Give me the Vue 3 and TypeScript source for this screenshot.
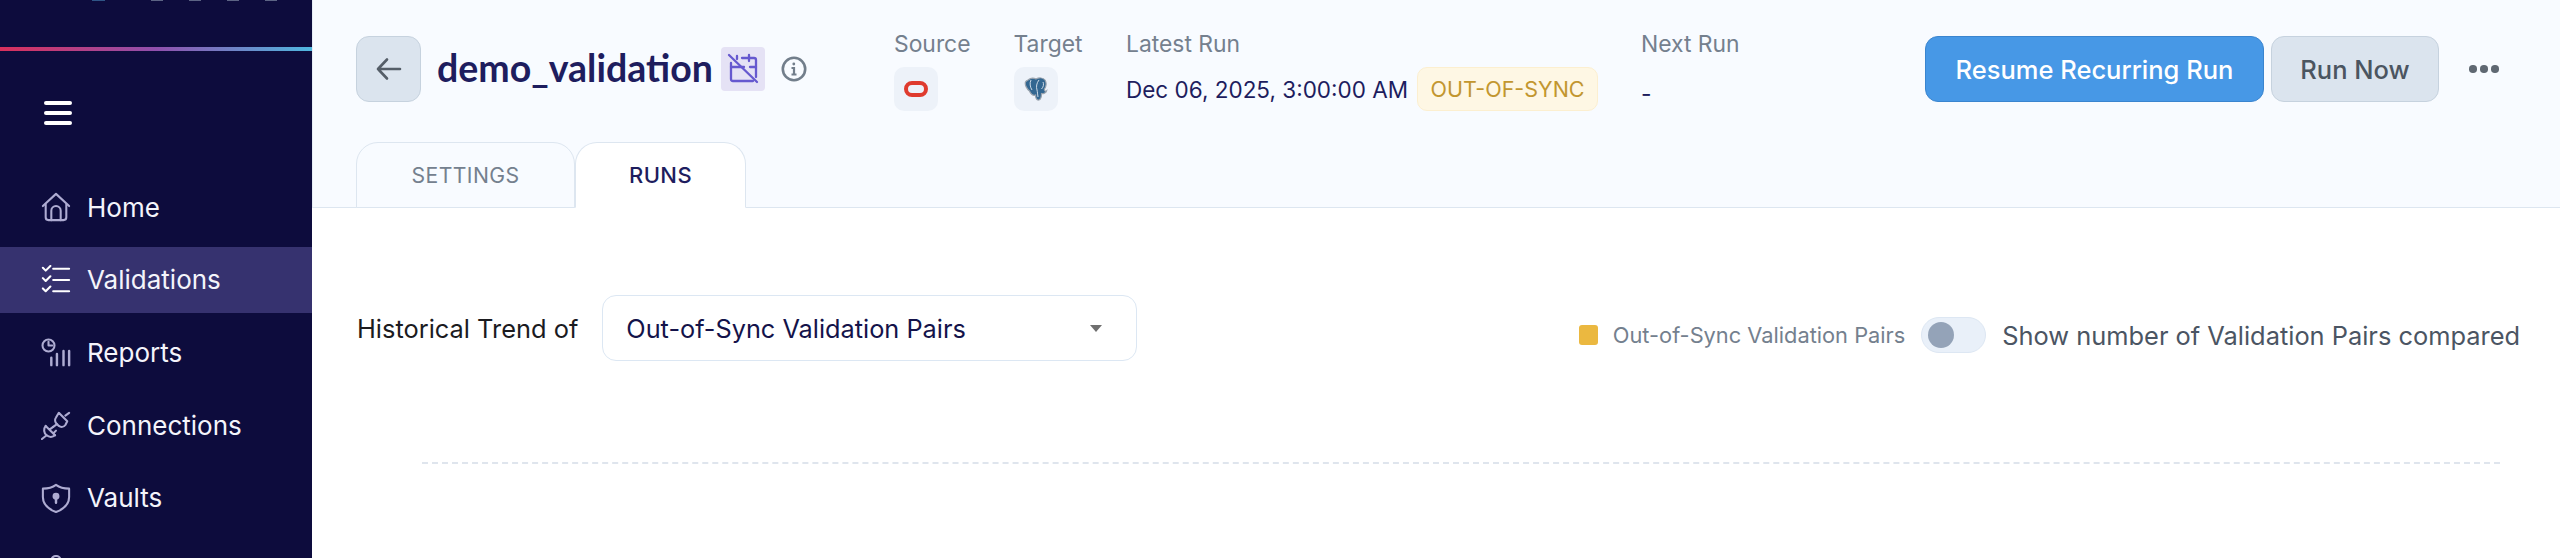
<script setup lang="ts">
const navItems = [
  { name: 'Home', icon: 'home', active: false },
  { name: 'Validations', icon: 'list', active: true },
  { name: 'Reports', icon: 'reports', active: false },
  { name: 'Connections', icon: 'plug', active: false },
  { name: 'Vaults', icon: 'shield', active: false },
  { name: '', icon: 'more', active: false }
]
</script>

<template>
  <div class="page">
    <aside class="sidebar">
      <div class="logo-strip"><i></i><i></i><i></i><i></i><i></i></div>
      <div class="rainbow"></div>
      <div class="burger"><i></i><i></i><i></i></div>
      <nav class="nav">
        <a v-for="item in navItems" :key="item.icon" class="nav-item" :class="{ active: item.active }">
          <svg class="nav-icon" viewBox="0 0 32 32" fill="none" stroke="currentColor" stroke-width="2.2" stroke-linecap="round" stroke-linejoin="round">
            <template v-if="item.icon === 'home'">
              <path d="M2 15 16 2l14 13" />
              <path d="M5 13v14a3 3 0 0 0 3 3h16a3 3 0 0 0 3-3V13" />
              <path d="M11 30V20a5 5 0 0 1 10 0v10" />
            </template>
            <template v-else-if="item.icon === 'list'">
              <path d="m2 3 3 3 5-5M2 14l3 3 5-5M2 25l3 3 5-5" stroke="#fff" />
              <path d="M13 4h17M13 16h17M13 28h17" stroke="#fff" />
            </template>
            <template v-else-if="item.icon === 'reports'">
              <circle cx="8" cy="9" r="6.4" />
              <path d="M8 5v4h4" />
              <path d="M11 22v8M17 18v12M24 15v15M30 15v15" stroke-width="2.6" />
            </template>
            <template v-else-if="item.icon === 'plug'">
              <path d="m1 31 5-4M26 6l4-3" />
              <path d="m5 17 10 10M9 21l4-3M13 25l3-3" />
              <path d="M6 27a7 7 0 0 1-1-10M15 27a7 7 0 0 1-9 0" />
              <path d="m19 3 9 9-2 4a5 5 0 0 1-7 1l-2-2a5 5 0 0 1-1-7Z" />
              <path d="m13 18 4-3" />
            </template>
            <template v-else-if="item.icon === 'shield'">
              <path d="M16 2c4 3 9 4 14 4v9c0 8-6 13-14 16C8 28 2 23 2 15V6c5 0 10-1 14-4Z" />
              <circle cx="16" cy="14" r="2.6" fill="currentColor" />
              <path d="M16 15v6" stroke-width="2.6" />
            </template>
            <template v-else>
              <circle cx="16" cy="6" r="5" />
            </template>
          </svg>
          <span>{{ item.name }}</span>
        </a>
      </nav>
    </aside>

    <main class="main">
      <header class="header">
        <div class="top-row">
          <button class="back-btn">
            <svg width="26" height="24" viewBox="0 0 26 24" fill="none" stroke="#555e68" stroke-width="2.600" stroke-linecap="round" stroke-linejoin="round">
              <path d="M24 12H2M11 2.500 2 12l9 9.500" />
            </svg>
          </button>
          <h1 class="title">demo_validation</h1>
          <span class="paused-icon">
            <svg width="32" height="32" viewBox="0 0 32 32" fill="none" stroke="#6659cf" stroke-width="2.300" stroke-linecap="round" stroke-linejoin="round">
              <path d="M2 2 30 29" />
              <path d="M4 10v16a2 2 0 0 0 2 2h20" />
              <path d="M15 5h12a2 2 0 0 1 2 2v17" />
              <path d="M4 14h13M23 14h6M22 2v6M10 3v3" />
            </svg>
          </span>
          <svg class="info" width="26" height="26" viewBox="0 0 26 26" fill="none" stroke="#727e8b" stroke-width="2.600">
            <circle cx="13" cy="13" r="11.200" />
            <path d="M10.500 12H13v6.500M10.500 18.500h5" stroke-width="2.200" />
            <circle cx="12.800" cy="8" r="1.400" fill="#727e8b" stroke="none" />
          </svg>

          <div class="meta source">
            <span class="meta-label">Source</span>
            <span class="db-box">
              <svg width="24" height="16" viewBox="0 0 24 16" fill="none" stroke="#df3b2e" stroke-width="4"><rect x="2" y="2" width="20" height="12" rx="6" /></svg>
            </span>
          </div>
          <div class="meta target">
            <span class="meta-label">Target</span>
            <span class="db-box">
              <svg width="24" height="24" viewBox="0 0 24 24">
                <path d="M4 3C7 .5 10 1 12 2c3-1.500 7-1.500 9 1 2 3 1 7-.5 9-.5 2 1.500 2.500 2 2-.5 2-3.500 3-5 2.500 0 2.500 0 5.500-2.500 6.500-2.500.5-3.500-2-3.500-5-2.500 1-5-1-6-4C3 12 .5 8 1.500 5 2 4 3 3.500 4 3Z" fill="#336791" stroke="#9aa3ad" stroke-width="1.200" />
                <path d="M7 3c-1.500 3-1 7 1 10M15 3c-2.500 3-3 7-2 10 .5 2 .5 4 1 7M19 5c1 2 .5 5-1.500 7" fill="none" stroke="#dfe7ef" stroke-width=".9" />
              </svg>
            </span>
          </div>
          <div class="meta latest">
            <span class="meta-label">Latest Run</span>
            <span class="run-row">
              <span class="run-date">Dec 06, 2025, 3:00:00 AM</span>
              <span class="badge">OUT-OF-SYNC</span>
            </span>
          </div>
          <div class="meta next">
            <span class="meta-label">Next Run</span>
            <span class="next-value">-</span>
          </div>

          <div class="actions">
            <button class="btn primary">Resume Recurring Run</button>
            <button class="btn secondary">Run Now</button>
            <span class="dots"><i></i><i></i><i></i></span>
          </div>
        </div>
        <div class="tabs">
          <div class="tab">SETTINGS</div>
          <div class="tab selected">RUNS</div>
        </div>
      </header>

      <section class="content">
        <div class="filter-row">
          <div class="trend">
            <span class="trend-label">Historical Trend of</span>
            <div class="select">
              <span>Out-of-Sync Validation Pairs</span>
              <i class="caret"></i>
            </div>
          </div>
          <div class="legend">
            <i class="swatch"></i>
            <span class="legend-text">Out-of-Sync Validation Pairs</span>
            <span class="toggle"><i></i></span>
            <span class="toggle-text">Show number of Validation Pairs compared</span>
          </div>
        </div>
        <div class="grid-line"></div>
      </section>
    </main>
  </div>
</template>

<style>
html, body {
  margin: 0;
  background: #fff;
  overflow: hidden;
}
</style>

<style scoped>
.page {
  display: flex;
  width: 2560px;
  height: 558px;
  overflow: hidden;
  font-family: Inter, "Liberation Sans", sans-serif;
}

.sidebar {
  width: 312px;
  flex: none;
  background: #0d0c3d;
  color: #fff;
  overflow: hidden;
}
.logo-strip {
  height: 47px;
  display: flex;
  gap: 26px;
  padding-left: 92px;
  box-sizing: border-box;
}
.logo-strip i {
  width: 12px;
  height: 1px;
  background: #5c6484;
}
.logo-strip i:first-child {
  width: 13px;
  margin-right: 20px;
  background: #2f5586;
}
.rainbow {
  height: 4px;
  background: linear-gradient(90deg, #d9305c, #9050ad 50%, #4fb8e0);
}
.burger {
  display: flex;
  flex-direction: column;
  gap: 6px;
  width: 28px;
  margin: 50px 0 0 44px;
}
.burger i {
  height: 4px;
  border-radius: 2px;
  background: #fff;
}
.nav {
  display: flex;
  flex-direction: column;
  gap: 6.700px;
  margin-top: 49px;
}
.nav-item {
  display: flex;
  align-items: center;
  gap: 16px;
  height: 66px;
  flex: none;
  padding-left: 41px;
  font-size: 26px;
  color: #f4f4fb;
}
.nav-item.active {
  background: #36326f;
}
.nav-icon {
  width: 30px;
  height: 30px;
  flex: none;
  color: #aeacd2;
}

.main {
  flex: 1;
  min-width: 0;
}
.header {
  height: 208px;
  box-sizing: border-box;
  padding: 36px 0 0 43px;
  background: #f8fbff;
  border-bottom: 1px solid #dde6f0;
  border-left: 1px solid #e6edf5;
}
.top-row {
  display: flex;
  align-items: flex-start;
  height: 106px;
}
.back-btn {
  width: 65px;
  height: 66px;
  flex: none;
  display: flex;
  align-items: center;
  justify-content: center;
  box-sizing: border-box;
  padding: 0;
  background: #dbe4ee;
  border: 1px solid #c6d2de;
  border-radius: 13px;
}
.title {
  width: 275px;
  flex: none;
  margin: 7px 0 0 16px;
  font-family: Lato, "Noto Sans", sans-serif;
  font-size: 37.500px;
  line-height: 50px;
  font-weight: 700;
  color: #1e1d5e;
  white-space: nowrap;
}
.paused-icon {
  width: 44px;
  height: 44px;
  flex: none;
  margin: 11px 0 0 9px;
  display: flex;
  align-items: center;
  justify-content: center;
  background: #e5e2f5;
  border-radius: 4px;
}
.info {
  flex: none;
  margin: 20px 0 0 16px;
}
.meta {
  display: flex;
  flex-direction: column;
  flex: none;
}
.meta-label {
  font-size: 22.860px;
  line-height: 27px;
  margin-top: -5px;
  color: #74808e;
}
.source {
  width: 119.500px;
  margin-left: 87px;
}
.target {
  width: 112.500px;
}
.latest {
  width: 515px;
}
.db-box {
  width: 44px;
  height: 44px;
  margin-top: 9px;
  display: flex;
  align-items: center;
  justify-content: center;
  background: #edf2f9;
  border-radius: 10px;
}
.run-row {
  display: flex;
  align-items: center;
  margin-top: 9px;
}
.run-date {
  font-size: 22.500px;
  color: #1e1d5e;
  white-space: nowrap;
}
.badge {
  margin-left: 9px;
  width: 181px;
  box-sizing: border-box;
  text-align: center;
  height: 44px;
  line-height: 42px;
  font-size: 21.500px;
  color: #c2962f;
  background: #fef7e4;
  border: 1px solid #fcefd0;
  border-radius: 10px;
  white-space: nowrap;
}
.next-value {
  margin-top: 22px;
  font-size: 22.860px;
  color: #1e1d5e;
}
.actions {
  position: absolute;
  left: 1925px;
  top: 36px;
  display: flex;
  align-items: center;
}
.btn {
  height: 66px;
  box-sizing: border-box;
  border-radius: 13px;
  font-family: inherit;
  font-size: 25.500px;
  font-weight: 500;
  padding: 0;
}
.primary {
  width: 339px;
  color: #fff;
  background: #4798e6;
  border: 1px solid #3a85cf;
}
.secondary {
  width: 168px;
  margin-left: 7px;
  color: #4b5560;
  background: #dbe4ee;
  border: 1px solid #c6d2de;
}
.dots {
  display: flex;
  gap: 3.500px;
  margin-left: 30px;
}
.dots i {
  width: 7.500px;
  height: 7.500px;
  border-radius: 50%;
  background: #5f6872;
}
.tabs {
  display: flex;
  margin-bottom: -1px;
}
.tab {
  width: 219px;
  height: 66px;
  box-sizing: border-box;
  display: flex;
  align-items: center;
  justify-content: center;
  font-size: 21.200px;
  letter-spacing: .4px;
  color: #74808e;
  background: #f8fbff;
  border: 1px solid #dde6f0;
  border-radius: 22px 22px 0 0;
}
.tab.selected {
  width: 171px;
  font-size: 22px;
  font-weight: 500;
  color: #1e1d5e;
  background: #fff;
  border-bottom-color: #fff;
}

.content {
  padding: 87px 0 0 45px;
}
.filter-row {
  display: flex;
  justify-content: space-between;
  align-items: flex-start;
  padding-right: 40px;
}
.trend {
  display: flex;
  align-items: center;
  gap: 24px;
}
.trend-label {
  font-size: 25.400px;
  color: #1b1b1f;
  white-space: nowrap;
}
.select {
  width: 535px;
  height: 66px;
  box-sizing: border-box;
  display: flex;
  align-items: center;
  justify-content: space-between;
  padding: 0 34px 0 23px;
  font-size: 25.300px;
  color: #14134a;
  background: #fff;
  border: 1px solid #dce7f3;
  border-radius: 14px;
}
.caret {
  width: 0;
  height: 0;
  border-left: 6px solid transparent;
  border-right: 6px solid transparent;
  border-top: 7px solid #6f6f6f;
}
.legend {
  display: flex;
  align-items: center;
  margin-top: 22px;
}
.swatch {
  width: 19px;
  height: 20px;
  background: #ebb840;
  border-radius: 3px;
}
.legend-text {
  margin-left: 15px;
  font-size: 21.800px;
  color: #74808e;
  white-space: nowrap;
}
.toggle {
  width: 65px;
  height: 36px;
  box-sizing: border-box;
  margin-left: 16px;
  display: flex;
  align-items: center;
  padding-left: 6px;
  background: #e9f0f9;
  border: 1px solid #dde7f3;
  border-radius: 18px;
}
.toggle i {
  width: 26px;
  height: 26px;
  border-radius: 50%;
  background: #94a3b8;
}
.toggle-text {
  margin-left: 16px;
  font-size: 25.400px;
  color: #4b5563;
  white-space: nowrap;
}
.grid-line {
  margin: 101px 60px 0 65px;
  border-top: 2px dashed #dfe5ed;
}
</style>
